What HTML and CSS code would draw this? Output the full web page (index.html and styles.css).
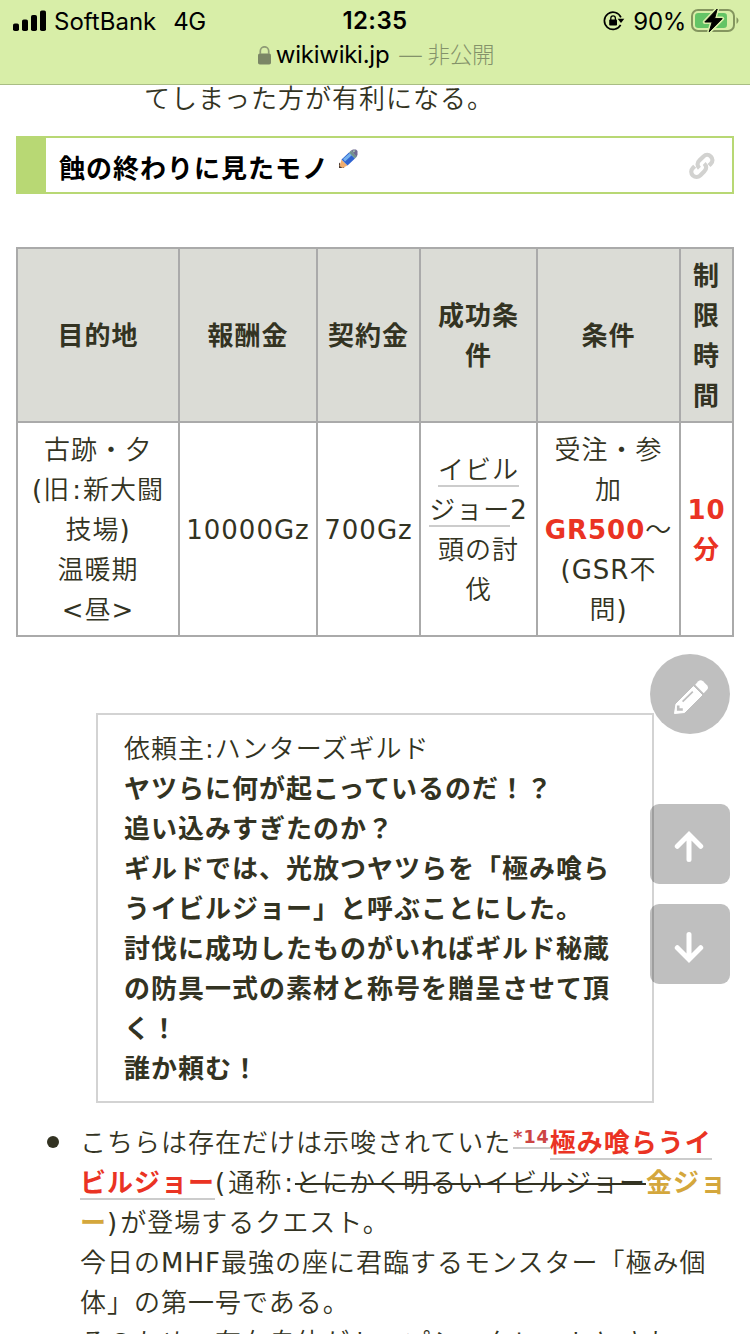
FILE: index.html
```html
<!DOCTYPE html>
<html lang="ja">
<head>
  <meta charset="UTF-8">
  <meta name="viewport" content="width=device-width, initial-scale=1">
  <title>wikiwiki.jp</title>
  <link rel="stylesheet" href="styles.css">
</head>
<body>
  <header class="browser-bar">
    <div class="status">
      <div class="status-left">
        <svg class="signal" width="34" height="22" viewBox="0 0 34 22">
          <rect x="0" y="13.5" width="6" height="7.5" rx="1.8"/>
          <rect x="9" y="9.5" width="6" height="11.5" rx="1.8"/>
          <rect x="18" y="5" width="6" height="16" rx="1.8"/>
          <rect x="27" y="0.5" width="6" height="20.5" rx="1.8"/>
        </svg>
        <span class="carrier">SoftBank</span>
        <span class="network">4G</span>
      </div>
      <div class="clock">12:35</div>
      <div class="status-right">
        <svg class="rotation" width="22" height="20" viewBox="0 0 22 20">
          <path d="M17.6 13.8A8.6 8.6 0 1 1 17.9 6.4" fill="none" stroke="#000" stroke-width="1.7"/>
          <path d="M14.6 7.7h6.7l-3.3 4.2z"/>
          <rect x="6.2" y="8.6" width="7.8" height="6" rx="0.8"/>
          <path d="M7.8 9V7.2a2.3 2.3 0 0 1 4.6 0V9" fill="none" stroke="#000" stroke-width="1.3"/>
        </svg>
        <span class="percent">90%</span>
        <svg class="battery" width="48" height="26" viewBox="0 0 48 26">
          <rect x="1" y="2" width="42" height="21" rx="6" fill="none" stroke="#84955f" stroke-width="2"/>
          <path d="M45.5 9.2c2.6 1.4 2.6 5.2 0 6.6z" fill="#84955f"/>
          <rect x="4" y="5" width="32" height="15" rx="3.2" fill="#64c466"/>
          <path d="M26.2 1 13.8 14h7.4l-3 9.8L31.2 10.6h-7.6z" stroke="#d8eea8" stroke-width="4" stroke-linejoin="round"/>
          <path d="M26.2 1 13.8 14h7.4l-3 9.8L31.2 10.6h-7.6z" stroke="#000" stroke-width="1" stroke-linejoin="round"/>
        </svg>
      </div>
    </div>
    <div class="address">
      <svg class="lock" width="13" height="19" viewBox="0 0 13 19">
        <rect x="0" y="7.5" width="13" height="11" rx="1.8" fill="#7b8666"/>
        <path d="M2.3 8V5a4.2 4.2 0 0 1 8.4 0v3" fill="none" stroke="#8f9b76" stroke-width="1.7"/>
      </svg>
      <span class="domain">wikiwiki.jp</span>
      <span class="private">— 非公開</span>
    </div>
  </header>

  <main class="content">
    <p class="previous">てしまった方が有利になる。</p>

    <h3 class="heading">
      <span class="heading-text">蝕の終わりに見たモノ</span>
      <svg class="edit-icon" width="20" height="20" viewBox="0 0 20 20">
        <path d="M1 19V13.5L6.5 19z" fill="#4b3a31"/>
        <path d="M1.5 17 3.5 10.5 9.5 16.5 4.5 19z" fill="#f0ae70"/>
        <path d="M3.5 10.5 11 3.5 17 9.5 9.5 16.5z" fill="#2f63cf"/>
        <path d="M5 10 12 4 14 6 7 12.5z" fill="#73b1ee"/>
        <path d="M11 3.5 13 1.5 19 7.5 17 9.5z" fill="#71938d"/>
        <path d="M13 1.5 15 .5H18L19.5 2V6L18.5 7.5z" fill="#6f6a91"/>
        <path d="M14.5 1.5h3l-1.7 2z" fill="#a7d5b3"/>
      </svg>
      <svg class="link-icon" width="28" height="28" viewBox="0 0 28 28">
        <path d="M11.4 16.2C8.9 13.7 9 10.8 11.3 8.6L15.5 4.4C17.7 2.3 20.6 2.3 22.8 4.4C25 6.6 25 9.6 22.8 11.8L21 13.6" fill="none" stroke="#d2d2d0" stroke-width="4.2"/>
        <path d="M16.2 11.5C18.8 14 18.7 17 16.4 19.2L12.2 23.4C10 25.5 7.1 25.5 4.9 23.4C2.7 21.2 2.7 18.2 4.9 16L6.7 14.2" fill="none" stroke="#d2d2d0" stroke-width="4.2"/>
      </svg>
    </h3>

    <table class="quest">
      <colgroup>
        <col class="col-place"><col class="col-reward"><col class="col-fee">
        <col class="col-goal"><col class="col-terms"><col class="col-time">
      </colgroup>
      <thead>
        <tr>
          <th>目的地</th>
          <th>報酬金</th>
          <th>契約金</th>
          <th>成功条<br>件</th>
          <th>条件</th>
          <th>制<br>限<br>時<br>間</th>
        </tr>
      </thead>
      <tbody>
        <tr>
          <td>古跡・夕<br>(旧<span class="colon">:</span>新大闘<br>技場)<br>温暖期<br>&lt;昼&gt;</td>
          <td>10000Gz</td>
          <td>700Gz</td>
          <td><a class="link">イビル<br>ジョー</a>2<br>頭の討<br>伐</td>
          <td>受注・参<br>加<br><strong class="red">GR500</strong>〜<br>(GSR不<br>問)</td>
          <td><strong class="red">10<br>分</strong></td>
        </tr>
      </tbody>
    </table>

    <blockquote class="request">
      依頼主:ハンターズギルド<br>
      <strong>ヤツらに何が起こっているのだ！？<br>
      追い込みすぎたのか？<br>
      ギルドでは、光放つヤツらを「極み喰ら<br>うイビルジョー」と呼ぶことにした。<br>
      討伐に成功したものがいればギルド秘蔵<br>の防具一式の素材と称号を贈呈させて頂<br>く！<br>
      誰か頼む！</strong>
    </blockquote>

    <ul class="notes">
      <li>こちらは存在だけは示唆されていた<a class="link note">*14</a><a class="link red">極み喰らうイ<br>ビルジョー</a><span class="paren">(</span>通称<span class="colon">:</span><del>とにかく明るいイビルジョー</del><strong class="gold">金ジョ<br>ー</strong><span class="paren">)</span>が登場するクエスト。<br>
      今日のMHF最強の座に君臨するモンスター「極み個<br>体」の第一号である。<br>
      そのため、存在自体がトップシークレットとされ</li>
    </ul>
  </main>

  <nav class="float-buttons">
    <a class="float-button round">
      <svg width="36" height="36" viewBox="0 0 36 36">
        <path d="M1.5 34.5 3 25 20.5 7.5 29 16 11.5 33.5z" fill="#fff" stroke="#fff" stroke-width="1" stroke-linejoin="round"/>
        <path d="M22.2 5.8 25.3 2.3Q27.5.2 30 2.2L34 6.3Q36 8.6 34 10.8L30.7 14.2z" fill="#fff"/>
        <path d="M9.6 22.6 19.8 12.7" stroke="#bebebe" stroke-width="1.7"/>
        <path d="M5.2 26.5V30.5H9.8" fill="none" stroke="#bebebe" stroke-width="2.6"/>
      </svg>
    </a>
    <a class="float-button up">
      <svg width="30" height="32" viewBox="0 0 30 32">
        <path d="M15 28.5V4M3.3 15.3 15 3.6 26.7 15.3" fill="none" stroke="#fff" stroke-width="5" stroke-linecap="round"/>
      </svg>
    </a>
    <a class="float-button">
      <svg width="30" height="32" viewBox="0 0 30 32">
        <path d="M15 3.5V28M3.3 16.7 15 28.4 26.7 16.7" fill="none" stroke="#fff" stroke-width="5" stroke-linecap="round"/>
      </svg>
    </a>
  </nav>
</body>
</html>
```
FILE: styles.css
```css
* {
  box-sizing: border-box;
}

body {
  margin: 0;
  height: 1334px;
  overflow: hidden;
  background: #fff;
  color: #333322;
  font-family: "DejaVu Sans", "Noto Sans CJK JP DemiLight", "Noto Sans CJK JP", sans-serif;
  font-size: 26px;
  line-height: 40px;
  letter-spacing: 1px;
  text-spacing-trim: space-all;
}

svg {
  display: block;
  flex: none;
}

th,
strong,
.heading,
.red {
  font-family: "DejaVu Sans", "Noto Sans CJK JP", sans-serif;
  font-weight: bold;
}

/* browser bar */
.browser-bar {
  position: fixed;
  top: 0;
  left: 0;
  z-index: 2;
  width: 100%;
  height: 85px;
  background: #d8eea8;
  border-bottom: 1px solid #a9bd84;
  color: #000;
  font-family: Inter, "Noto Sans CJK JP", sans-serif;
  font-size: 24px;
  letter-spacing: 0;
}

.status {
  display: grid;
  grid-template-columns: 1fr auto 1fr;
  height: 40px;
  padding: 0 11px 0 13px;
}

.status-left,
.status-right {
  display: flex;
  align-items: center;
}

.status-right {
  justify-content: flex-end;
}

.carrier {
  margin-left: 7px;
  padding-top: 2px;
}

.network {
  margin-left: 17px;
  padding-top: 2px;
  letter-spacing: -0.5px;
}

.clock {
  padding: 1px 2px 0 0;
  font-weight: 600;
  letter-spacing: 0.4px;
}

.percent {
  margin: 0 5px 0 8px;
  padding-top: 2px;
  letter-spacing: -0.3px;
}

.address {
  display: flex;
  justify-content: center;
  align-items: center;
  height: 30px;
  padding-left: 2px;
}

.domain {
  margin-left: 5px;
  letter-spacing: -0.25px;
}

.private {
  margin-left: 10px;
  color: #84926a;
  font-size: 22.5px;
  font-weight: 300;
  letter-spacing: -0.3px;
}

/* page */
.content {
  padding: 79px 16px 0;
}

.previous {
  margin: 0 0 17px 128px;
}

.heading {
  display: flex;
  align-items: center;
  height: 58px;
  margin: 0;
  padding: 0 16px 0 13px;
  border: 2px solid #b8d874;
  border-left-width: 30px;
  color: #000;
  font-size: 26px;
}

.heading-text {
  padding-top: 7px;
}

.edit-icon {
  margin: 0 auto 12px 9px;
}

.link-icon {
  margin-top: 1px;
}

.quest {
  width: 718px;
  margin: 53px 0 76px;
  border-collapse: collapse;
  table-layout: fixed;
  text-align: center;
}

.quest th,
.quest td {
  padding: 7px 0 5px;
  border: 2px solid #aaa;
}

.quest th {
  background: #dbdcd6;
}

.col-place { width: 162px; }
.col-reward { width: 138px; }
.col-fee { width: 103px; }
.col-goal { width: 117px; }
.col-terms { width: 143px; }
.col-time { width: 53px; }

.link {
  border-bottom: 2px solid #ccc;
}

.red {
  color: #ea3323;
}

.gold {
  color: #d4a73c;
}

.colon {
  margin: 0 1px 0 2px;
}

.paren {
  margin-right: 2px;
}

.request {
  width: 558px;
  margin: 0 80px 20px;
  padding: 14px 26px 12px;
  border: 2px solid #d3d3d3;
  white-space: nowrap;
}

.notes {
  margin: 0;
  padding: 0 0 0 64px;
  list-style: none;
  white-space: nowrap;
}

.notes li::before {
  content: "";
  float: left;
  width: 12px;
  height: 12px;
  margin: 13px 0 0 -33px;
  border-radius: 50%;
  background: #333322;
}

.note {
  margin-left: 2px;
  color: #cc4444;
  font-size: 17.5px;
  font-weight: bold;
  line-height: 1;
  vertical-align: 9px;
}

/* buttons over the page */
.float-buttons {
  position: fixed;
  top: 654px;
  right: 20px;
  display: flex;
  flex-direction: column;
  gap: 20px;
}

.float-button {
  display: flex;
  justify-content: center;
  align-items: center;
  width: 80px;
  height: 80px;
  padding: 6px 2px 0 0;
  border-radius: 9px;
  background: rgba(0, 0, 0, 0.25);
}

.round {
  margin-bottom: 50px;
  padding: 6px 0 0 2px;
  border-radius: 50%;
}
```
